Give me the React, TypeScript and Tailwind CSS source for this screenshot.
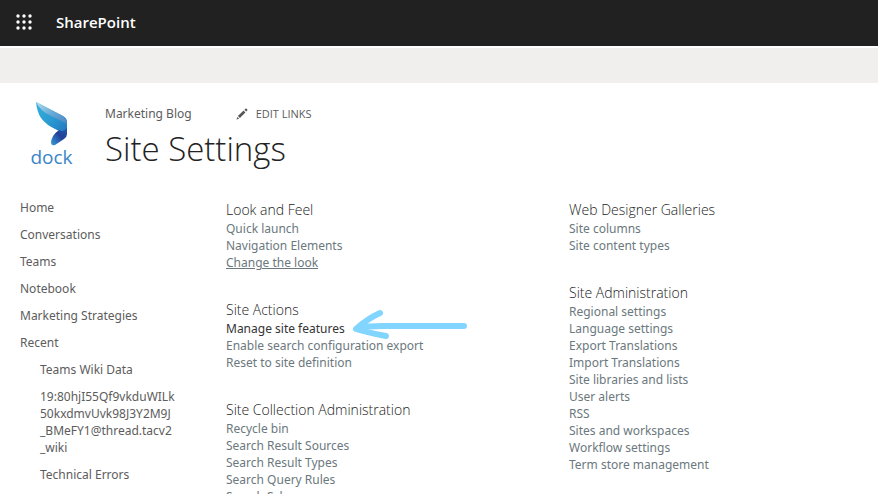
import React from "react";

type Section = { title: string; links: string[] };

const navLinks = ["Home", "Conversations", "Teams", "Notebook", "Marketing Strategies"];

const leftSections: Section[] = [
  { title: "Look and Feel", links: ["Quick launch", "Navigation Elements", "Change the look"] },
  {
    title: "Site Actions",
    links: ["Manage site features", "Enable search configuration export", "Reset to site definition"],
  },
  {
    title: "Site Collection Administration",
    links: ["Recycle bin", "Search Result Sources", "Search Result Types", "Search Query Rules", "Search Schema"],
  },
];

const rightSections: Section[] = [
  { title: "Web Designer Galleries", links: ["Site columns", "Site content types"] },
  {
    title: "Site Administration",
    links: [
      "Regional settings",
      "Language settings",
      "Export Translations",
      "Import Translations",
      "Site libraries and lists",
      "User alerts",
      "RSS",
      "Sites and workspaces",
      "Workflow settings",
      "Term store management",
    ],
  },
];

function Waffle() {
  return (
    <svg width="16" height="16" viewBox="0 0 16 16" fill="#fff" aria-hidden="true">
      {[2, 8, 14].map((y) => [2, 8, 14].map((x) => <circle key={`${x}-${y}`} cx={x} cy={y} r="1.7" />))}
    </svg>
  );
}

function DockLogo() {
  return (
    <a href="#" aria-label="dock" className="flex w-[63px] flex-col items-center text-[#3a86c6]">
      <svg width="34" height="44" viewBox="0 0 34 44" aria-hidden="true">
        <defs>
          <linearGradient id="wing" x1="0" y1="0" x2="1" y2="1">
            <stop offset="0" stopColor="#b4e0ea" />
            <stop offset="0.5" stopColor="#69aad6" />
            <stop offset="1" stopColor="#4a86c4" />
          </linearGradient>
          <linearGradient id="body" x1="0" y1="0" x2="1" y2="1">
            <stop offset="0" stopColor="#35b2dc" />
            <stop offset="0.5" stopColor="#2a9bd3" />
            <stop offset="1" stopColor="#2273bd" />
          </linearGradient>
          <linearGradient id="tail" x1="1" y1="0" x2="0" y2="1">
            <stop offset="0" stopColor="#2458ab" />
            <stop offset="0.45" stopColor="#20409a" />
            <stop offset="1" stopColor="#3aa0dc" />
          </linearGradient>
        </defs>
        <path d="M1 0 L28 14 Q32 16 32 20 V33 Q28 30 22 28 Q11 23 6 16 Q2 10 1 0Z" fill="url(#body)" />
        <path d="M1 0 L28 14 Q32 16 32 22 Q27 19 16 14 Q5 9 1 0Z" fill="url(#wing)" />
        <path d="M24 28 Q28 31 32 26 V32 Q32 35 29 37 L20 43 Q16 44 16 40 Q17 33 24 28Z" fill="url(#tail)" />
      </svg>
      <span className="font-['Open_Sans',sans-serif] text-[19px] leading-[22px]">dock</span>
    </a>
  );
}

function Pencil() {
  return (
    <svg width="12" height="12" viewBox="0 0 12 12" fill="#555" aria-hidden="true">
      <path d="M0.5 11.5 L1.3 8.9 L3.1 10.7Z M1.9 8.1 L7.6 2.6 L9.4 4.4 L3.9 10.1Z M8.4 1.8 L9.5 .8 Q10.3 .3 11 1 Q11.7 1.7 11.2 2.5 L10.2 3.6Z" />
    </svg>
  );
}

function Arrow() {
  return (
    <svg
      className="pointer-events-none absolute -top-[11px] left-full ml-2"
      width="114"
      height="30"
      viewBox="0 0 114 30"
      fill="none"
      stroke="#82d5ff"
      strokeWidth="6"
      strokeLinecap="round"
      strokeLinejoin="round"
      aria-hidden="true"
    >
      <path d="M27 4 Q14 10 3 20 Q12 23 33 27 M5 19 Q15 17 30 17 H111" />
    </svg>
  );
}

function linkStyle(label: string) {
  if (label === "Manage site features") return "relative text-[#333]";
  if (label === "Change the look") return "text-[#6b787d] underline underline-offset-1";
  return "text-[#6b787d] hover:underline";
}

function SettingsColumn({ sections }: { sections: Section[] }) {
  return (
    <div className="flex flex-col gap-[29px]">
      {sections.map((section) => (
        <section key={section.title}>
          <h2 className="font-['Open_Sans',sans-serif] text-sm leading-5 font-light text-[#222]">{section.title}</h2>
          <ul>
            {section.links.map((label) => (
              <li key={label} className="flex">
                <a href="#" className={linkStyle(label)}>
                  {label}
                  {label === "Manage site features" && <Arrow />}
                </a>
              </li>
            ))}
          </ul>
        </section>
      ))}
    </div>
  );
}

export default function App() {
  return (
    <div className="h-screen overflow-hidden bg-white font-['Noto_Sans',sans-serif] text-xs leading-[17px] whitespace-nowrap text-[#5c5c5c]">
      <header className="flex h-[46px] items-center gap-6 bg-[#212121] px-4 pb-0.5">
        <button type="button" aria-label="App launcher">
          <Waffle />
        </button>
        <a href="#" className="font-['Open_Sans',sans-serif] text-[15px] font-semibold text-white">
          SharePoint
        </a>
      </header>
      <div className="mt-0.5 h-[35px] bg-[#f0efed]" />

      <div className="flex gap-[22px] pt-[19px] pl-5">
        <DockLogo />
        <div className="pt-[3px]">
          <div className="flex items-center gap-11">
            <a href="#">Marketing Blog</a>
            <button type="button" className="flex items-center gap-2 font-['Open_Sans',sans-serif] text-[11px]">
              <Pencil />
              EDIT LINKS
            </button>
          </div>
          <h1 className="mt-[3px] font-['Open_Sans',sans-serif] text-[33px] leading-[48px] font-light text-[#222]">
            Site Settings
          </h1>
        </div>
      </div>

      <div className="grid grid-cols-[206px_343px_1fr] pt-[26px] pl-5">
        <nav className="flex flex-col gap-2.5">
          {navLinks.map((label) => (
            <a key={label} href="#">
              {label}
            </a>
          ))}
          <a href="#">Recent</a>
          <div className="flex w-[165px] flex-col gap-2.5 pl-5">
            <a href="#">Teams Wiki Data</a>
            <a href="#" className="whitespace-normal">
              19:80hjI55Qf9vkduWILk
              <wbr />
              50kxdmvUvk98J3Y2M9J
              <wbr />
              _BMeFY1@thread.tacv2
              <wbr />
              _wiki
            </a>
            <a href="#">Technical Errors</a>
          </div>
        </nav>
        <div className="grid grid-cols-subgrid col-span-2 pt-px">
          <SettingsColumn sections={leftSections} />
          <SettingsColumn sections={rightSections} />
        </div>
      </div>
    </div>
  );
}
